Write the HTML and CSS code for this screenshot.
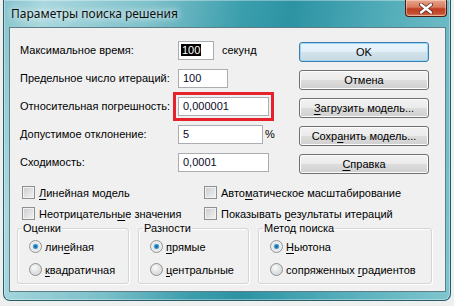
FILE: index.html
```html
<html>

<head>
	<title>Параметры поиска решения</title>
	<link rel="stylesheet" href="styles.css">
</head>
<body>
	<div class="window">
		<div class="titlebar">
			<span class="title">Параметры поиска решения</span>
			<button type="button" class="close">
				<svg width="14" height="11" viewBox="0 0 14 11">
					<path d="M2 1.5 L12 9.5 M12 1.5 L2 9.5" stroke="#5b2a20" stroke-width="4" stroke-linecap="round"/>
					<path d="M2 1.5 L12 9.5 M12 1.5 L2 9.5" stroke="#fff" stroke-width="2.4" stroke-linecap="round"/>
				</svg>
			</button>
		</div>
		<div class="client">
			<div class="top">
				<div class="fields">
					<label>Максимальное время:</label>
					<div class="cell"><div class="field w36"><span class="sel">100</span></div><span class="unit">секунд</span></div>
					<label>Предельное число итераций:</label>
					<div class="cell"><div class="field w50">100</div></div>
					<label>Относительная погрешность:</label>
					<div class="cell"><div class="field w91 marked">0,000001</div></div>
					<label>Допустимое отклонение:</label>
					<div class="cell"><div class="field w85">5</div><span class="pct">%</span></div>
					<label>Сходимость:</label>
					<div class="cell"><div class="field w91">0,0001</div></div>
				</div>
				<div class="buttons">
					<button type="button" class="btn default">OK</button>
					<button type="button" class="btn">Отмена</button>
					<button type="button" class="btn"><u>З</u>агрузить модель...</button>
					<button type="button" class="btn">Сохр<u>а</u>нить модель...</button>
					<button type="button" class="btn"><u>С</u>правка</button>
				</div>
			</div>
			<div class="checks">
				<div class="check"><span class="box"></span><span><u>Л</u>инейная модель</span></div>
				<div class="check"><span class="box"></span><span>Авто<u>м</u>атическое масштабирование</span></div>
				<div class="check"><span class="box"></span><span>Неотрицательн<u>ы</u>е значения</span></div>
				<div class="check"><span class="box"></span><span>Показывать <u>р</u>езультаты итераций</span></div>
			</div>
			<div class="groups">
				<fieldset class="group g1">
					<legend>Оценки</legend>
					<div class="radio"><span class="dot on"></span><span>лин<u>е</u>йная</span></div>
					<div class="radio"><span class="dot"></span><span><u>к</u>вадратичная</span></div>
				</fieldset>
				<fieldset class="group g2">
					<legend>Разности</legend>
					<div class="radio"><span class="dot on"></span><span><u>п</u>рямые</span></div>
					<div class="radio"><span class="dot"></span><span><u>ц</u>ентральные</span></div>
				</fieldset>
				<fieldset class="group g3">
					<legend>Метод поиска</legend>
					<div class="radio"><span class="dot on"></span><span><u>Н</u>ьютона</span></div>
					<div class="radio"><span class="dot"></span><span>сопряженных <u>г</u>радиентов</span></div>
				</fieldset>
			</div>
		</div>
	</div>
</body>

</html>
```

FILE: styles.css
```css
body { margin: 0; background: #eef0f0; font-family: "Liberation Sans", Arial, sans-serif; font-size: 11px; color: #000; }
u { text-decoration-thickness: 1px; text-underline-offset: 2px; }

.window { box-sizing: border-box; width: 448px; height: 301px; margin-left: 3px; border: 1px solid #2a5c68; border-top: none; border-radius: 0 0 7px 7px;
	background: linear-gradient(100deg, #86c4cd 0%, #a9d8de 8%, #7cc0ca 30%, #3b9eac 48%, #2c93a3 58%, #4eaab7 75%, #7fc6cf 100%);
	box-shadow: inset 0 0 0 1px rgba(255,255,255,.35); }

.titlebar { height: 27px; display: flex; align-items: flex-start; position: relative; }
.title { font-family: "Noto Sans", "Liberation Sans", sans-serif; font-size: 12px; margin: 5px 0 0 7px; color: #101010; text-shadow: 0 0 6px rgba(255,255,255,.9), 0 0 10px rgba(255,255,255,.7); }
.close { margin: 0 3px 0 auto; width: 42px; height: 17px; border: 1px solid #4e1c12; border-top: none; border-radius: 0 0 4px 4px; padding: 0; display: flex; align-items: center; justify-content: center;
	background: linear-gradient(#e9a48c 0%, #d97a5f 45%, #bf3d22 55%, #c5502f 85%, #dc8a68 100%); box-shadow: inset 0 0 0 1px rgba(255,235,225,.45); }

.client { box-sizing: border-box; width: 437px; height: 265px; margin-left: 5px; background: #f0f0f0; border: 1px solid #5f7f88; }

.top { display: flex; }
.fields { display: grid; grid-template-columns: 158px auto; grid-auto-rows: 28px; align-items: center; padding: 8px 0 0 10px; }
.cell { display: flex; align-items: center; }
.field { box-sizing: border-box; height: 19px; background: #fff; border: 1px solid #abadb3; padding: 0 0 0 4px; line-height: 17px; color: #0a0a28; }
.w36 { width: 36px; padding-left: 2px; }
.w50 { width: 50px; }
.w85 { width: 85px; }
.w91 { width: 91px; }
.sel { background: #000; color: #fff; padding: 0 1px; }
.marked { outline: 3px solid #e5222b; outline-offset: 2px; }
.unit { margin-left: 8px; }
.pct { margin-left: 2px; }

.buttons { display: flex; flex-direction: column; gap: 8px; padding-top: 14px; margin: 0 16px 0 auto; }
.btn { box-sizing: border-box; width: 130px; height: 20px; padding: 0; font: inherit; color: #000; border: 1px solid #707070; border-radius: 3px;
	background: linear-gradient(#f2f2f2 0%, #ebebeb 48%, #dddddd 52%, #cfcfcf 100%); box-shadow: inset 0 0 0 1px #fcfcfc; }
.btn.default { border-color: #3c7fb1; box-shadow: inset 0 0 0 1px #9fd5f3; background: linear-gradient(#eaf6fd 0%, #e2eff6 48%, #d3e3ec 52%, #c6d8e2 100%); }

.checks { display: grid; grid-template-columns: 182px auto; grid-auto-rows: 21px; align-items: center; margin-top: 6px; padding-left: 12px; }
.check { display: flex; align-items: center; }
.box { box-sizing: border-box; width: 13px; height: 13px; margin-right: 4px; border: 1px solid #8e8f8f; background: linear-gradient(135deg, #c8cbcf, #f4f4f4); box-shadow: inset 0 0 0 1px #f2f2f2; }

.groups { display: flex; gap: 9px; margin: -2px 0 0 7px; }
.group { box-sizing: border-box; margin: 0; padding: 0 0 2px 4px; border: 1px solid #d3d6d8; border-radius: 3px; box-shadow: inset 1px 1px 0 #fff, 1px 1px 0 #fff; min-inline-size: 0; }
.g1 { width: 112px; }
.g2 { width: 111px; }
.g3 { width: 174px; }
legend { padding: 0 1px; line-height: 13px; }
.radio { display: flex; align-items: center; height: 23px; padding-left: 7px; }
.dot { box-sizing: border-box; width: 13px; height: 13px; margin-right: 3px; border-radius: 50%; border: 1px solid #8e9094;
	background: radial-gradient(circle at 40% 35%, #fafafa 0%, #e4e4e4 45%, #cfd1d3 100%); }
.dot.on { background: radial-gradient(circle at 50% 50%, #1b5f8e 0%, #2f86bd 22%, #7cc8ee 34%, #e8e8e8 40%, #f8f8f8 100%); }
```
